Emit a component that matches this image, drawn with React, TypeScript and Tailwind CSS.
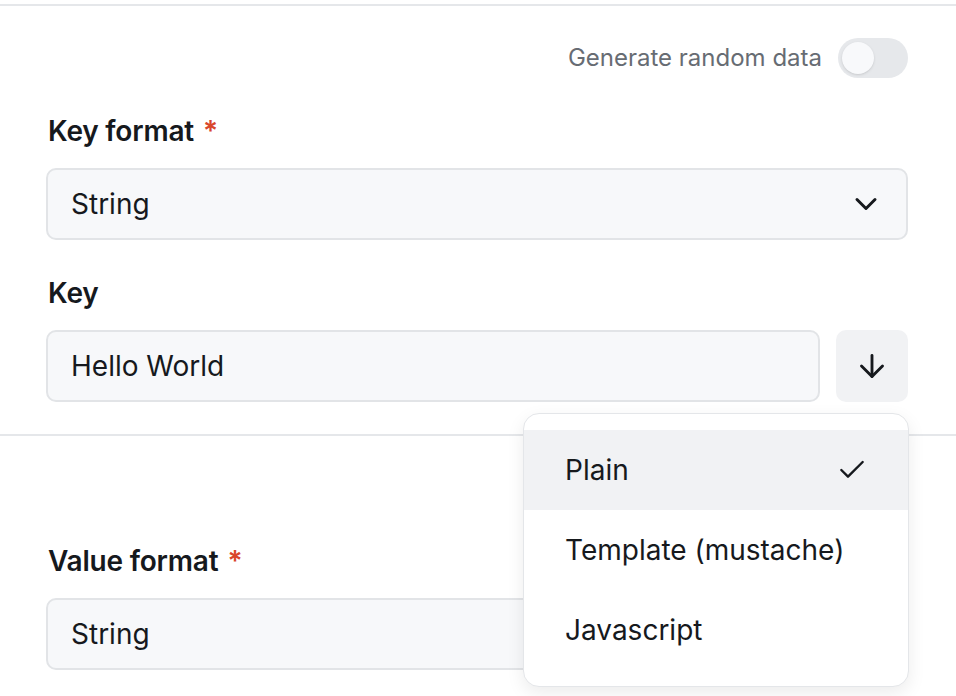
import React from 'react';
import { ChevronDown, ArrowDown, Check } from 'lucide-react';

const Label = ({ text, required = false }: { text: string; required?: boolean }) => (
  <div className="text-[28px] leading-[32px] font-semibold text-[#16191d] pl-[2px] tracking-[-0.2px]">
    {text}
    {required && <span className="text-[#d9462b] ml-[9px]">*</span>}
  </div>
);

const RandomToggle = () => (
  <div className="flex items-center justify-end gap-[16px] mt-[32px]">
    <span className="text-[24px] text-[#676c73]">Generate random data</span>
    <button className="w-[70px] h-[40px] rounded-full bg-[#e6e8eb] p-[4px] flex items-center">
      <span className="w-[32px] h-[32px] rounded-full bg-[#f8f9fb] shadow-sm" />
    </button>
  </div>
);

const Field = ({ value }: { value: string }) => (
  <div className="h-[72px] flex items-center px-[23px] rounded-[10px] border-2 border-[#e2e4e7] bg-[#f7f8fa] text-[28px] text-[#16191d]">
    {value}
  </div>
);

const App: React.FC = () => {
  return (
    <div
      className="relative w-[956px] h-[696px] overflow-hidden bg-white"
      style={{ fontFamily: 'Inter, "Noto Sans", sans-serif' }}
    >
      <div className="pt-[4px]">
        {/* Key section */}
        <section className="border-t-2 border-[#e5e7ea] pl-[46px] pr-[48px] pb-[32px]">
          <RandomToggle />

          <div className="mt-[37px]">
            <Label text="Key format" required />
          </div>
          <div className="mt-[21px] h-[72px] flex items-center justify-between pl-[23px] pr-[22px] rounded-[10px] border-2 border-[#e2e4e7] bg-[#f7f8fa] text-[28px] text-[#16191d]">
            <span>String</span>
            <ChevronDown size={36} strokeWidth={2} className="text-[#16191d]" />
          </div>

          <div className="mt-[37px]">
            <Label text="Key" />
          </div>
          <div className="mt-[21px] flex gap-[16px]">
            <div className="flex-1">
              <Field value="Hello World" />
            </div>
            <button className="w-[72px] h-[72px] rounded-[10px] bg-[#f1f2f4] flex items-center justify-center">
              <ArrowDown size={36} strokeWidth={1.9} className="text-[#16191d]" />
            </button>
          </div>
        </section>

        {/* Value section (its random-data toggle sits under the open menu) */}
        <section className="border-t-2 border-[#e5e7ea] pl-[46px] pr-[48px] pb-[32px]">
          <div className="mt-[32px] h-[40px]" />
          <div className="mt-[37px]">
            <Label text="Value format" required />
          </div>
          <div className="mt-[21px]">
            <Field value="String" />
          </div>
        </section>
      </div>

      {/* Key mode menu */}
      <div className="absolute left-[523px] top-[413px] w-[386px] py-[16px] rounded-[16px] border border-[#e4e6e9] bg-white shadow-[0_6px_18px_rgba(0,0,0,0.08)]">
        <div className="h-[80px] flex items-center justify-between pl-[41px] pr-[40px] bg-[#f1f2f4] text-[28px] text-[#16191d]">
          <span>Plain</span>
          <Check size={32} strokeWidth={1.8} className="text-[#16191d]" />
        </div>
        <div className="h-[80px] flex items-center pl-[41px] text-[28px] text-[#16191d]">
          Template (mustache)
        </div>
        <div className="h-[80px] flex items-center pl-[41px] text-[28px] text-[#16191d]">
          Javascript
        </div>
      </div>
    </div>
  );
};

export default App;
